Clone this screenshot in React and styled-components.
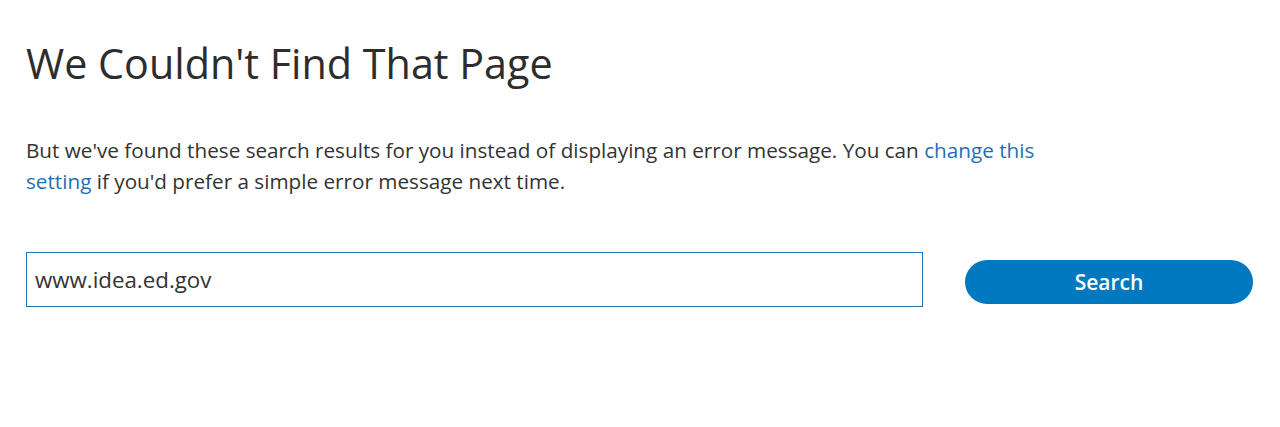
import React from 'react';
import styled, { createGlobalStyle } from 'styled-components';

const GlobalStyle = createGlobalStyle`
  body {
    margin: 0;
    background: #fff;
    font-family: "Open Sans", "Liberation Sans", sans-serif;
    color: #333;
  }
`;

const Page = styled.main`
  padding: 35px 27px 0 26px;
`;

const Title = styled.h1`
  margin: 0;
  font-size: 41.3px;
  font-weight: 400;
  line-height: 56px;
  color: #2d2d2d;
`;

const Message = styled.p`
  margin: 44px 0 0 0;
  max-width: 1030px;
  font-size: 20.7px;
  line-height: 31px;
  color: #333;
`;

const Link = styled.a`
  color: #1f6fb5;
  text-decoration: none;
`;

const SearchRow = styled.form`
  display: flex;
  align-items: flex-start;
  gap: 42px;
  margin-top: 55px;
`;

const SearchInput = styled.input`
  flex: 0 0 897px;
  box-sizing: border-box;
  height: 55px;
  padding: 0 8px;
  border: 1px solid #1b75bb;
  border-radius: 0;
  font-family: inherit;
  font-size: 22.3px;
  color: #333;
  outline: none;
`;

const SearchButton = styled.button`
  flex: 1;
  height: 44px;
  margin-top: 8px;
  border: none;
  border-radius: 22px;
  background: #0079c1;
  color: #fff;
  font-family: inherit;
  font-size: 21px;
  font-weight: 600;
  cursor: pointer;
`;

export default function App() {
  return (
    <>
      <GlobalStyle />
      <Page>
        <Title>We Couldn't Find That Page</Title>
        <Message>
          But we've found these search results for you instead of displaying an error message. You can{' '}
          <Link href="#">change this setting</Link> if you'd prefer a simple error message next time.
        </Message>
        <SearchRow onSubmit={(e) => e.preventDefault()}>
          <SearchInput type="text" defaultValue="www.idea.ed.gov" />
          <SearchButton type="submit">Search</SearchButton>
        </SearchRow>
      </Page>
    </>
  );
}
